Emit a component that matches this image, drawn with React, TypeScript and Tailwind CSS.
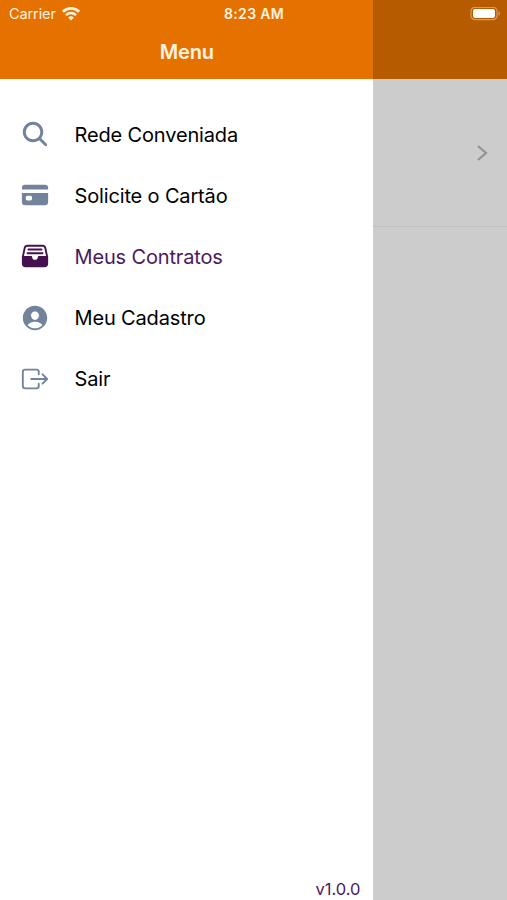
import clsx from 'clsx';
import {
  IoCard,
  IoExitOutline,
  IoFileTrayFull,
  IoPersonCircle,
  IoSearch,
} from 'react-icons/io5';

const ITEMS = [
  { label: 'Rede Conveniada', icon: IoSearch },
  { label: 'Solicite o Cartão', icon: IoCard },
  { label: 'Meus Contratos', icon: IoFileTrayFull, active: true },
  { label: 'Meu Cadastro', icon: IoPersonCircle },
  { label: 'Sair', icon: IoExitOutline },
];

function WifiIcon() {
  return (
    <svg width="18" height="14" viewBox="0 0 18 14" fill="none" stroke="#fff3e0">
      <path d="M.9 4.7a11.6 11.6 0 0 1 16.2 0" strokeWidth="2.7" />
      <path d="M4 8.1a7.1 7.1 0 0 1 10 0" strokeWidth="2.5" />
      <path d="M9 13.6 6.1 10.6a4.2 4.2 0 0 1 5.8 0z" fill="#fff3e0" stroke="none" />
    </svg>
  );
}

function BatteryIcon() {
  return (
    <svg width="31" height="14" viewBox="0 0 31 14" fill="none">
      <rect x="1" y="0.3" width="26" height="12.4" rx="4" stroke="#d39c64" strokeWidth="1.2" />
      <rect x="3" y="2.1" width="22" height="8.8" rx="2.2" fill="#fff" />
      <path d="M28.5 4.3c2 .6 2 3.8 0 4.4z" fill="#d39c64" />
    </svg>
  );
}

function StatusBar() {
  return (
    <div className="absolute inset-x-0 top-0 grid h-[27px] grid-cols-3 items-center pl-[9px] pr-[6px] text-[#fff3e0]">
      <div className="flex items-center gap-[6px]">
        <span className="text-[14.5px] tracking-[-0.1px]">Carrier</span>
        <WifiIcon />
      </div>
      <span className="pr-[2px] text-center text-[14px] font-semibold tracking-[0.3px]">
        8:23 AM
      </span>
      <div className="flex justify-end">
        <BatteryIcon />
      </div>
    </div>
  );
}

function Drawer() {
  return (
    <aside className="flex w-[372.5px] flex-col bg-white">
      <header className="flex h-[79px] items-end justify-center bg-[#e57200] pb-[12px] pl-[1px]">
        <h1 className="text-[20px] leading-[30px] font-semibold tracking-[-0.2px] text-[#fff3e0]">
          Menu
        </h1>
      </header>
      <nav className="flex-1 pt-[24.5px]">
        <ul>
          {ITEMS.map(({ label, icon: Icon, active }) => (
            <li
              key={label}
              className={clsx(
                'flex h-[61.2px] items-center gap-[24.5px] pl-[20px]',
                active ? 'text-[#4a1a5c]' : 'text-black',
              )}
            >
              <Icon size={30} className={active ? 'text-[#44104f]' : 'text-[#73839c]'} />
              <span className="pt-px text-[20px] tracking-[-0.15px]">{label}</span>
            </li>
          ))}
        </ul>
      </nav>
      <footer className="pr-[12px] text-right text-[16.5px] leading-[22px] text-[#4a1a5c]">
        v1.0.0
      </footer>
    </aside>
  );
}

function DimmedPage() {
  return (
    <main className="flex-1 bg-[#cccccc]">
      <div className="h-[79px] bg-[#b65b00]" />
      <div className="flex h-[148px] items-center justify-end border-b border-[#c0c0c0] pt-px pr-[19px]">
        <svg width="12" height="18" viewBox="0 0 12 18" fill="none" stroke="#939393" strokeWidth="2.2">
          <path d="m2 2 8 7-8 7" />
        </svg>
      </div>
    </main>
  );
}

export default function App() {
  return (
    <div className="relative flex h-[900px] w-[507px] overflow-hidden font-['Inter','Liberation_Sans',sans-serif]">
      <Drawer />
      <DimmedPage />
      <StatusBar />
    </div>
  );
}
